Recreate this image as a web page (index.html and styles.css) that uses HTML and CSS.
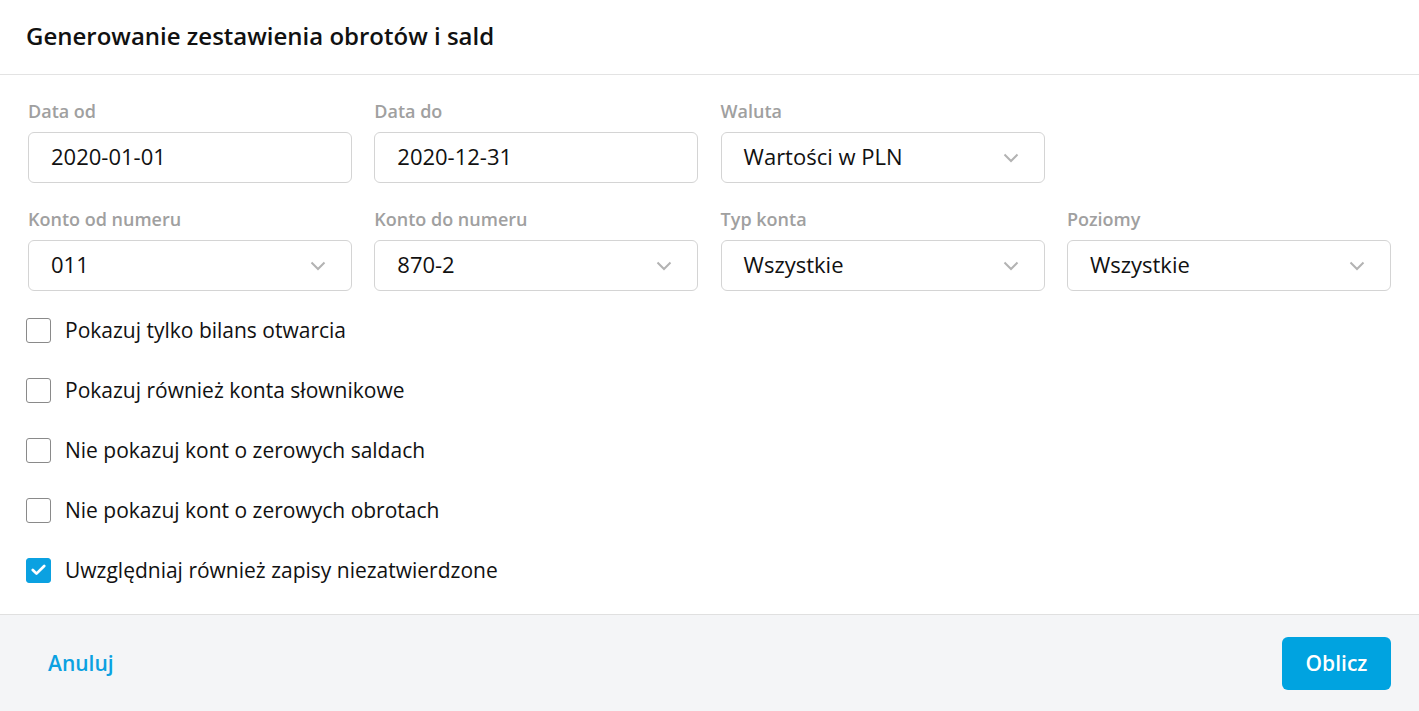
FILE: index.html
```html
<!DOCTYPE html>
<html lang="pl">
<head>
  <meta charset="UTF-8">
  <title>Generowanie zestawienia obrotów i sald</title>
  <link rel="stylesheet" href="styles.css">
</head>
<body>
  <div class="dialog">
    <div class="dialog-header">
      <h1>Generowanie zestawienia obrotów i sald</h1>
    </div>

    <form class="dialog-body">
      <div class="fields">
        <div class="field">
          <label>Data od</label>
          <div class="input">2020-01-01</div>
        </div>
        <div class="field">
          <label>Data do</label>
          <div class="input">2020-12-31</div>
        </div>
        <div class="field">
          <label>Waluta</label>
          <div class="input select">Wartości w PLN <span class="chevron"><svg width="16" height="10" viewBox="0 0 16 10"><path d="M1.5 1.5 L8 8 L14.5 1.5" fill="none" stroke="#b3b3b3" stroke-width="2"/></svg></span></div>
        </div>
        <div class="field empty"></div>

        <div class="field">
          <label>Konto od numeru</label>
          <div class="input select">011 <span class="chevron"><svg width="16" height="10" viewBox="0 0 16 10"><path d="M1.5 1.5 L8 8 L14.5 1.5" fill="none" stroke="#b3b3b3" stroke-width="2"/></svg></span></div>
        </div>
        <div class="field">
          <label>Konto do numeru</label>
          <div class="input select">870-2 <span class="chevron"><svg width="16" height="10" viewBox="0 0 16 10"><path d="M1.5 1.5 L8 8 L14.5 1.5" fill="none" stroke="#b3b3b3" stroke-width="2"/></svg></span></div>
        </div>
        <div class="field">
          <label>Typ konta</label>
          <div class="input select">Wszystkie <span class="chevron"><svg width="16" height="10" viewBox="0 0 16 10"><path d="M1.5 1.5 L8 8 L14.5 1.5" fill="none" stroke="#b3b3b3" stroke-width="2"/></svg></span></div>
        </div>
        <div class="field">
          <label>Poziomy</label>
          <div class="input select">Wszystkie <span class="chevron"><svg width="16" height="10" viewBox="0 0 16 10"><path d="M1.5 1.5 L8 8 L14.5 1.5" fill="none" stroke="#b3b3b3" stroke-width="2"/></svg></span></div>
        </div>
      </div>

      <div class="checks">
        <div class="check"><span class="box"></span>Pokazuj tylko bilans otwarcia</div>
        <div class="check"><span class="box"></span>Pokazuj również konta słownikowe</div>
        <div class="check"><span class="box"></span>Nie pokazuj kont o zerowych saldach</div>
        <div class="check"><span class="box"></span>Nie pokazuj kont o zerowych obrotach</div>
        <div class="check"><span class="box checked"><svg width="15" height="12" viewBox="0 0 15 12"><path d="M1.8 6 L5.5 9.6 L13.2 2" fill="none" stroke="#fff" stroke-width="2.7" stroke-linecap="round" stroke-linejoin="round"/></svg></span>Uwzględniaj również zapisy niezatwierdzone</div>
      </div>
    </form>

    <div class="dialog-footer">
      <a href="#" class="link-btn">Anuluj</a>
      <button class="submit-btn">Oblicz</button>
    </div>
  </div>
</body>
</html>
```

FILE: styles.css
```css
body {
  margin: 0;
  font-family: "Open Sans", Arial, sans-serif;
  background-color: #fff;
  color: #111;
}

.dialog {
  width: 1419px;
  height: 711px;
  display: flex;
  flex-direction: column;
}

.dialog-header {
  height: 75px;
  box-sizing: border-box;
  border-bottom: 1px solid #e3e3e3;
  display: flex;
  align-items: center;
  padding: 0 0 3px 26px;
}

h1 {
  margin: 0;
  font-size: 24px;
  font-weight: 600;
  color: #111;
}

.dialog-body {
  padding: 25px 28px 14px;
}

.fields {
  display: grid;
  grid-template-columns: repeat(4, 324px);
  column-gap: 22.3px;
  row-gap: 25px;
}

.field label {
  display: block;
  font-size: 18px;
  line-height: 22px;
  font-weight: 600;
  color: #a0a0a0;
  margin-bottom: 10px;
}

.input {
  height: 51px;
  box-sizing: border-box;
  border: 1px solid #d4d4d4;
  border-radius: 6px;
  padding: 0 22px 3px;
  display: flex;
  align-items: center;
  font-size: 22px;
  color: #111;
}

.select {
  justify-content: space-between;
}

.chevron {
  display: flex;
  margin: 3px 3px 0 0;
}

.checks {
  margin-top: 9px;
}

.check {
  height: 60px;
  display: flex;
  align-items: center;
  font-size: 21px;
  color: #111;
}

.box {
  width: 25px;
  height: 25px;
  box-sizing: border-box;
  border: 1.5px solid #8a8a8a;
  border-radius: 3px;
  margin-left: -2px;
  margin-right: 14px;
  display: flex;
  align-items: center;
  justify-content: center;
}

.box.checked {
  background-color: #0ba1e1;
  border-color: #0ba1e1;
}

.dialog-footer {
  flex: 1;
  border-top: 1px solid #e0e0e0;
  background-color: #f4f5f7;
  display: flex;
  align-items: center;
  justify-content: space-between;
  padding: 0 28px 0 48px;
}

.link-btn {
  font-size: 21px;
  font-weight: 600;
  color: #0ba1e1;
  text-decoration: none;
}

.submit-btn {
  background-color: #00a3e0;
  color: white;
  border: none;
  border-radius: 6px;
  width: 109px;
  height: 53px;
  font-family: inherit;
  font-size: 21px;
  font-weight: 600;
  cursor: pointer;
}
```
